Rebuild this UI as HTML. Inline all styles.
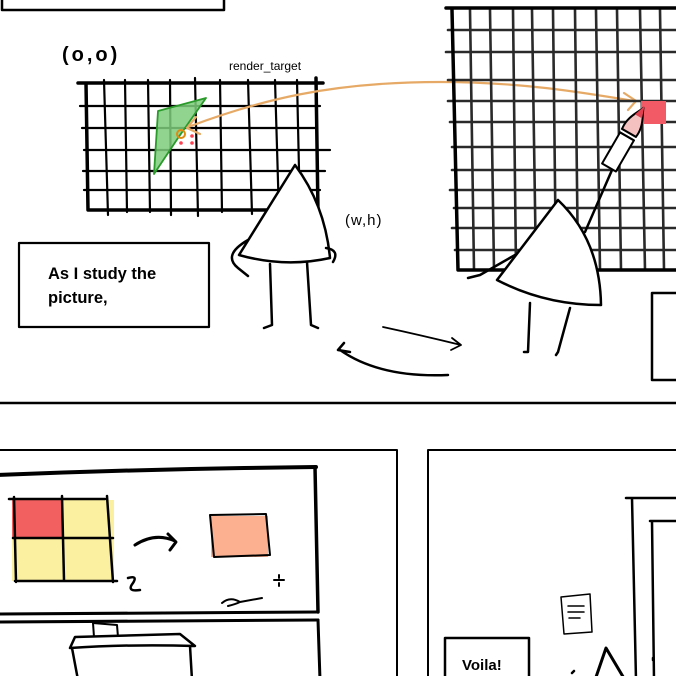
<!DOCTYPE html>
<html><head><meta charset="utf-8"><style>
html,body{margin:0;padding:0;background:#fff;width:676px;height:676px;overflow:hidden}
svg{display:block}
text{font-family:"Liberation Sans",sans-serif}
</style></head><body>
<svg width="676" height="676" viewBox="0 0 676 676" xmlns="http://www.w3.org/2000/svg" fill="none" stroke="#000" stroke-linecap="round" stroke-linejoin="round">
<path d="M2 -5 V10 H224 V-5" stroke-width="2.5"/>
<text x="62" y="61" font-size="20" font-weight="bold" fill="#000" stroke="none" letter-spacing="3">(o,o)</text>
<text x="229" y="70" font-size="12" fill="#000" stroke="none">render_target</text>
<g stroke-width="2.2">
<path d="M80 83 H323 M80 106 H320 M82 128 H315 M84 150 H330 M83 171 H325 M84 190 H320"/>
<path d="M104 80 L108 215 M125 80 L127 212 M148 80 L150 212 M170 80 L171 215 M195 78 L198 216 M220 80 L222 212 M248 80 L252 214 M275 80 L279 215 M297 80 L300 215"/>
</g>
<path d="M78 83 H323 M86 83 L88 210 H318 M316 78 L318 212" stroke-width="3.5"/>
<path d="M158 111 L206 98 L178 138 L154 174 Z" fill="#7dcc7d" fill-opacity="0.85" stroke="#2a9a2a" stroke-width="1.8"/>
<circle cx="181" cy="134" r="4" stroke="#e08a10" stroke-width="2"/>
<g fill="#ff4050" stroke="none"><circle cx="192" cy="136" r="1.8"/><circle cx="192" cy="143" r="1.8"/><circle cx="181" cy="143" r="1.8"/></g>
<path d="M188 127 C260 100 330 82 440 82 C520 82 580 92 634 101" stroke="#e6aa66" stroke-width="2.2"/>
<path d="M196 117 L187 128 L200 134" stroke="#e6aa66" stroke-width="2.2"/>
<path d="M624 93 L636 101 L628 110" stroke="#e6aa66" stroke-width="2.2"/>
<g stroke-width="2.6" stroke="#2a2a2a">
<path d="M446 8 H676 M448 30 H676 M446 52 H676 M448 80 H676 M448 101 H676 M450 122 H676 M452 147 H676 M452 170 H676 M450 190 H676 M454 208 H676 M452 228 H676 M455 250 H676"/>
<path d="M470 10 L474 270 M490 10 L494 270 M513 10 L516 270 M532 10 L536 270 M553 10 L556 270 M575 10 L578 270 M596 10 L600 270 M617 10 L621 270 M640 10 L645 270 M660 10 L664 270"/>
</g>
<path d="M446 8 H676 M452 10 L458 270 H676" stroke-width="3.5"/>
<rect x="641" y="101" width="25" height="23" fill="#f25a66" stroke="none"/>
<g transform="rotate(30 622 145)">
<rect x="614" y="135" width="16" height="36" fill="#fff" stroke-width="2"/>
<path d="M614 135 H630 M614 131 H630" stroke-width="2"/>
<path d="M614 131 C612 118 620 108 622 102 C624 108 632 118 630 131 Z" fill="#f5c0c0" stroke-width="2"/>
<path d="M618 112 L622 100 L626 112" fill="#e04050" stroke="none"/>
</g>
<text x="345" y="225" font-size="15" fill="#000" stroke="none" letter-spacing="1">(w,h)</text>
<path d="M295 165 L239 255 Q285 268 330 258 Q325 205 295 165 Z" fill="#fff" stroke-width="2.5"/>
<path d="M248 240 Q222 255 238 268 L248 276 M326 248 Q340 250 333 262" stroke-width="2.5"/>
<path d="M270 264 L272 325 L264 328 M307 262 L311 325 L318 328" stroke-width="2.5"/>
<rect x="19" y="243" width="190" height="84" fill="#fff" stroke-width="2.2"/>
<text x="48" y="279" font-size="16.5" font-weight="bold" fill="#000" stroke="none">As I study the</text>
<text x="48" y="303" font-size="16.5" font-weight="bold" fill="#000" stroke="none">picture,</text>
<path d="M558 200 L497 280 Q545 305 601 305 Q600 240 558 200 Z" fill="#fff" stroke-width="2.5"/>
<path d="M585 232 L612 170 M515 255 L480 275 L468 278" stroke-width="2.5"/>
<path d="M530 303 L528 352 L524 352 M570 308 L558 352 L556 355" stroke-width="2.5"/>
<path d="M383 327 Q420 335 461 345 M452 338 L461 345 L451 350" stroke-width="1.8"/>
<path d="M448 375 Q380 378 340 350 M344 343 L338 350 L350 352" stroke-width="2.5"/>
<path d="M680 293 H652 V380 H680" stroke-width="2.5"/>
<path d="M0 403 H676" stroke-width="2.5"/>
<path d="M-2 450 H397 V680" stroke-width="2"/>
<path d="M-2 475 Q120 470 244 468 L316 467" stroke-width="4"/>
<path d="M315 467 L318 612" stroke-width="3.5"/>
<path d="M-2 614 L318 612 M-2 622 L318 620" stroke-width="3"/>
<path d="M318 620 L320 680" stroke-width="3"/>
<rect x="12" y="500" width="50" height="39" fill="#f26060" stroke="none"/>
<rect x="62" y="500" width="52" height="39" fill="#fbefa0" stroke="none"/>
<rect x="12" y="539" width="50" height="42" fill="#fbefa0" stroke="none"/>
<rect x="62" y="539" width="52" height="42" fill="#fbefa0" stroke="none"/>
<path d="M9 499 H105 M14 497 L16 582 M62 496 L64 580 M13 538 H113 M15 581 H117 M107 496 L113 582" stroke-width="2.5"/>
<path d="M135 545 Q155 532 175 541 M168 534 L176 542 L170 550" stroke-width="3"/>
<rect x="211" y="516" width="57" height="41" fill="#fcb090" stroke="none"/>
<path d="M210 515 L266 514 L270 555 L214 557 Z" stroke-width="2"/>
<path d="M128 578 Q138 575 133 583 Q126 592 140 590" stroke-width="2.5"/>
<path d="M279 575 V578 M274 580 H284 M279 583 V586" stroke-width="2"/>
<path d="M222 603 Q230 596 240 602 L262 598 M228 606 Q236 604 240 602" stroke-width="2"/>
<path d="M93 623 L94 637 H118 L117 625 Z" fill="#fff" stroke-width="2"/>
<path d="M75 637 L70 648 Q130 644 195 646 L180 634 Z M72 648 L78 680 M190 646 L192 680" fill="#fff" stroke-width="2.5"/>
<path d="M428 680 V450 H680" stroke-width="2"/>
<path d="M626 498 H680 M632 498 L636 680 M650 521 H680 M652 521 L654 680" stroke-width="2.5"/>
<path d="M561 597 L590 594 L592 632 L564 634 Z" fill="#fff" stroke-width="1.5"/>
<path d="M568 606 H584 M568 612 H584 M569 618 H580" stroke-width="1.5"/>
<rect x="445" y="638" width="84" height="44" fill="#fff" stroke-width="2.5"/>
<text x="462" y="670" font-size="15" font-weight="bold" fill="#000" stroke="none">Voila!</text>
<path d="M595 680 L606 648 L625 680" stroke-width="3"/>
<path d="M572 673 L574 671 M653 658 L653 660" stroke-width="2.5"/>
</svg>
</body></html>
